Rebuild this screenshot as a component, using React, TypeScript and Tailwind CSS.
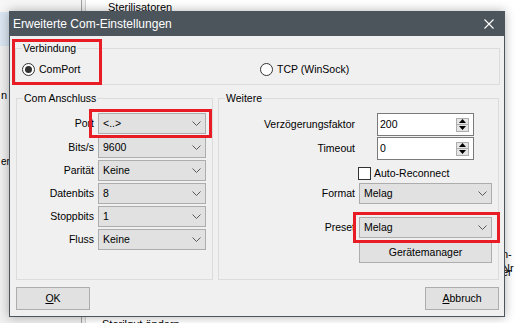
import React from "react";

function Chevron() {
  return (
    <svg width="9" height="5" viewBox="0 0 9 5" className="shrink-0">
      <path d="M0.5 0.5L4.5 4.5L8.5 0.5" fill="none" stroke="#5a5a5a" strokeWidth="1" />
    </svg>
  );
}

function Combo({ value, className = "" }: { value: string; className?: string }) {
  return (
    <div
      className={`flex h-[21px] shrink-0 items-center justify-between border border-[#adadad] bg-[#e1e1e1] pl-[4px] pr-[4px] ${className}`}
    >
      <span>{value}</span>
      <Chevron />
    </div>
  );
}

function Radio({ label, checked }: { label: string; checked?: boolean }) {
  return (
    <div className="flex items-center gap-[4px]">
      <div className="flex h-[13px] w-[13px] items-center justify-center rounded-full border border-[#333] bg-white">
        {checked && <div className="h-[7px] w-[7px] rounded-full bg-[#333]" />}
      </div>
      <span>{label}</span>
    </div>
  );
}

function SpinBox({ value }: { value: string }) {
  return (
    <div className="ml-[22px] flex h-[23px] w-[97px] items-center border border-[#7a7a7a] bg-white pl-[2px]">
      <span className="flex-1">{value}</span>
      <div className="mr-[4px] flex flex-col">
        <div className="flex h-[7px] w-[13px] items-center justify-center border border-[#adadad] bg-[#e5e5e5]">
          <svg width="7" height="4" viewBox="0 0 7 4">
            <path d="M0 4L3.5 0L7 4Z" fill="#000" />
          </svg>
        </div>
        <div className="flex h-[7px] w-[13px] items-center justify-center border border-t-0 border-[#adadad] bg-[#e5e5e5]">
          <svg width="7" height="4" viewBox="0 0 7 4">
            <path d="M0 0L7 0L3.5 4Z" fill="#000" />
          </svg>
        </div>
      </div>
    </div>
  );
}

function Button({ children, className = "" }: { children: React.ReactNode; className?: string }) {
  return (
    <div
      className={`flex h-[23px] items-center justify-center border border-[#adadad] bg-[#e1e1e1] ${className}`}
    >
      {children}
    </div>
  );
}

const comRows = [
  { label: "Port", value: "<..>" },
  { label: "Bits/s", value: "9600" },
  { label: "Parität", value: "Keine" },
  { label: "Datenbits", value: "8" },
  { label: "Stoppbits", value: "1" },
  { label: "Fluss", value: "Keine" },
];

export default function App() {
  return (
    <div className="relative h-[323px] w-[515px] overflow-hidden bg-white font-['Liberation_Sans',Arial,sans-serif] text-[10.5px] text-black">
      {/* Background application */}
      <div className="flex h-full text-[11px]">
        <div className="flex w-[82px] flex-col border-r border-[#a0a0a0] bg-[#efefef]">
          <div className="h-[12px] bg-[#f6f6f6]" />
          <div className="h-[34px] bg-[#d9e5f1]" />
          <div className="mt-[42px] h-[14px] pl-[1px] leading-[14px]">n</div>
          <div className="mt-[53px] h-[14px] pl-[1px] text-[10px] leading-[14px]">erf</div>
        </div>
        <div className="w-[4px] border-r border-[#d0d0d0] bg-[#f0f0f0]" />
        <div className="flex flex-1 flex-col bg-white">
          <div className="h-[14px] pl-[22px] leading-[14px]">Sterilisatoren</div>
          <div className="mt-[199px] h-px bg-[#dedede]" />
          <div className="mt-[34px] h-[14px] pl-[416px] leading-[14px]">n-Nr</div>
          <div className="mt-[4px] h-[14px] pl-[416px] leading-[14px]">er</div>
          <div className="mt-[38px] h-[14px] pl-[16px] leading-[14px]">Sterilgut ändern</div>
        </div>
      </div>

      {/* Dialog */}
      <div className="absolute left-[9px] top-[11px] flex h-[306px] w-[496px] flex-col border border-[#4c555c] bg-[#f0f0f0] shadow-[0_0_10px_rgba(0,0,0,0.3)]">
        <div className="flex h-[24px] shrink-0 items-center justify-between bg-[#4c555c] pl-[3px] pr-[10px] text-[12px] text-white">
          <span>Erweiterte Com-Einstellungen</span>
          <svg width="10" height="10" viewBox="0 0 10 10">
            <path d="M0.5 0.5L9.5 9.5M9.5 0.5L0.5 9.5" stroke="#fff" strokeWidth="1.1" />
          </svg>
        </div>

        <div className="flex flex-1 flex-col pl-[5px] pr-[4px]">
          <fieldset className="mt-[6px] h-[43px] border border-[#dcdcdc]">
            <legend className="ml-[6px] px-[1px] leading-[13px]">Verbindung</legend>
            <div className="flex h-[29px] items-center pl-[6px]">
              <div className="w-[238px]">
                <Radio label="ComPort" checked />
              </div>
              <Radio label="TCP (WinSock)" />
            </div>
          </fieldset>

          <div className="mx-[1px] mt-[7px] flex h-[188px] gap-[5px]">
            <fieldset className="h-full w-[197px] border border-[#dcdcdc]">
              <legend className="ml-[6px] px-[1px] leading-[13px]">Com Anschluss</legend>
              <div className="flex flex-col gap-[2px] pr-[6px] pt-[8px]">
                {comRows.map((row, i) => (
                  <div
                    key={row.label}
                    className={`flex h-[21px] items-center justify-end gap-[4px] ${i === 0 ? "mb-[1px]" : ""}`}
                  >
                    <span>{row.label}</span>
                    <Combo value={row.value} className="w-[108px]" />
                  </div>
                ))}
              </div>
            </fieldset>

            <fieldset className="h-full flex-1 border border-[#dcdcdc]">
              <legend className="ml-[6px] px-[1px] leading-[13px]">Weitere</legend>
              <div className="flex flex-col pt-[8px]">
                <div className="flex items-center">
                  <span className="w-[136px] text-right">Verzögerungsfaktor</span>
                  <SpinBox value="200" />
                </div>
                <div className="mt-[1px] flex items-center">
                  <span className="w-[136px] text-right">Timeout</span>
                  <SpinBox value="0" />
                </div>
                <div className="mt-[7px] flex h-[13px] items-center">
                  <div className="ml-[139px] h-[13px] w-[13px] border border-[#333] bg-white" />
                  <span className="ml-[3px]">Auto-Reconnect</span>
                </div>
                <div className="mt-[3px] flex items-center">
                  <span className="w-[136px] text-right">Format</span>
                  <Combo value="Melag" className="ml-[4px] w-[133px]" />
                </div>
                <div className="mt-[13px] flex items-center">
                  <span className="w-[136px] text-right">Preset</span>
                  <Combo value="Melag" className="ml-[4px] w-[133px]" />
                </div>
                <div className="ml-[140px] mt-[4px] flex h-[21px] w-[133px] items-center justify-center border border-[#adadad] bg-[#e1e1e1]">
                  Gerätemanager
                </div>
              </div>
            </fieldset>
          </div>

          <div className="mx-[1px] mt-[7px] flex justify-between">
            <Button className="w-[74px]">
              <span className="underline">O</span>K
            </Button>
            <Button className="w-[74px]">
              <span className="underline">A</span>bbruch
            </Button>
          </div>
        </div>
      </div>

      {/* Red annotation frames */}
      <div className="pointer-events-none absolute left-[12px] top-[39px] h-[46px] w-[90px] border-[3px] border-[#e81c24]" />
      <div className="pointer-events-none absolute left-[89px] top-[109px] h-[29px] w-[123px] border-[3px] border-[#e81c24]" />
      <div className="pointer-events-none absolute left-[353px] top-[212px] h-[31px] w-[147px] border-[3px] border-[#e81c24]" />
    </div>
  );
}
